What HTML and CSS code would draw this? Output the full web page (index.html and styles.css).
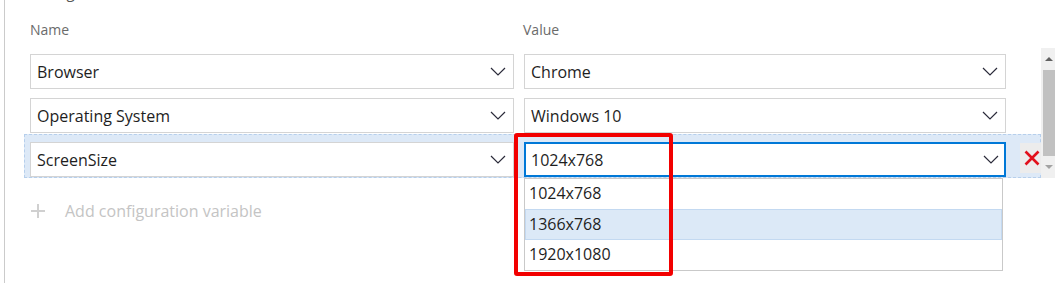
FILE: index.html
```html
<!DOCTYPE html>
<html lang="en">
<head>
  <meta charset="UTF-8" />
  <meta name="viewport" content="width=device-width, initial-scale=1.0"/>
  <title>Configuration Variables</title>
  <link rel="stylesheet" href="styles.css">
</head>
<body>

  <div class="panel">
    <h3 class="section-title">Configurations</h3>

    <div class="labels">
      <span>Name</span>
      <span>Value</span>
    </div>

    <div class="table">
      <div class="rows">
        <div class="row">
          <div class="select">
            <span>Browser</span>
            <svg class="chev" width="16" height="9" viewBox="0 0 16 9"><polyline points="1,1 8,8 15,1" /></svg>
          </div>
          <div class="select">
            <span>Chrome</span>
            <svg class="chev" width="16" height="9" viewBox="0 0 16 9"><polyline points="1,1 8,8 15,1" /></svg>
          </div>
        </div>

        <div class="row">
          <div class="select">
            <span>Operating System</span>
            <svg class="chev" width="16" height="9" viewBox="0 0 16 9"><polyline points="1,1 8,8 15,1" /></svg>
          </div>
          <div class="select">
            <span>Windows 10</span>
            <svg class="chev" width="16" height="9" viewBox="0 0 16 9"><polyline points="1,1 8,8 15,1" /></svg>
          </div>
        </div>

        <div class="row selected">
          <div class="select">
            <span>ScreenSize</span>
            <svg class="chev" width="16" height="9" viewBox="0 0 16 9"><polyline points="1,1 8,8 15,1" /></svg>
          </div>
          <div class="select-wrap">
            <div class="select focused">
              <span>1024x768</span>
              <svg class="chev" width="16" height="9" viewBox="0 0 16 9"><polyline points="1,1 8,8 15,1" /></svg>
            </div>
            <ul class="options">
              <li>1024x768</li>
              <li class="hover">1366x768</li>
              <li>1920x1080</li>
            </ul>
          </div>
          <button class="remove" title="Remove">
            <svg width="16" height="16" viewBox="0 0 16 16"><path d="M1.5 1.5 L14.5 14.5 M14.5 1.5 L1.5 14.5" /></svg>
          </button>
        </div>
      </div>

      <div class="scrollbar">
        <div class="arrow up"></div>
        <div class="thumb"></div>
        <div class="arrow down"></div>
      </div>
    </div>

    <div class="add-row">
      <svg class="plus" width="14" height="14" viewBox="0 0 14 14"><path d="M7 0 V14 M0 7 H14" /></svg>
      <span>Add configuration variable</span>
    </div>
  </div>

  <div class="callout"></div>

</body>
</html>
```

FILE: styles.css
```css
body {
  margin: 0;
  font-family: "Open Sans", "Noto Sans", sans-serif;
  color: #1e1e1e;
  background-color: #fff;
  height: 283px;
  overflow: hidden;
}

.panel {
  margin-left: 4px;
  border-left: 1px solid #cbcbcb;
  height: 301px;
  padding-left: 19px;
}

.section-title {
  margin: -18px 0 0 6px;
  font-size: 15px;
  font-weight: normal;
  line-height: 20px;
  color: #555;
}

.labels {
  display: grid;
  grid-template-columns: 493px auto;
  padding: 0 0 0 6px;
  margin-top: 18px;
  height: 26px;
  line-height: 20px;
  font-size: 14px;
  color: #6b6b6b;
}

.table {
  display: flex;
}

.rows {
  width: 1017px;
}

.row {
  display: grid;
  grid-template-columns: 484px 482px auto;
  column-gap: 10px;
  align-items: start;
  padding: 7px 0 0 5px;
  border: 1px solid transparent;
}

.row.selected {
  background-color: #dde9f7;
  border: 1px dashed #b6cfec;
}

.select {
  display: flex;
  align-items: center;
  justify-content: space-between;
  box-sizing: border-box;
  height: 35px;
  padding: 0 7px 0 6px;
  border: 1px solid #d4d4d4;
  background-color: #fff;
  font-size: 16px;
}

.select.focused {
  border: 2px solid #0078d7;
  padding: 0 5px 0 5px;
}

.chev polyline {
  fill: none;
  stroke: #2b2b3a;
  stroke-width: 1.2;
}

.select-wrap {
  position: relative;
}

.options {
  position: absolute;
  top: 36px;
  left: 0;
  width: 479px;
  box-sizing: border-box;
  margin: 0;
  padding: 0;
  list-style: none;
  border: 1px solid #c9c9c9;
  background-color: #fff;
  font-size: 16px;
  z-index: 2;
}

.options li {
  height: 30px;
  line-height: 29px;
  padding-left: 4px;
  box-sizing: border-box;
}

.options li.hover {
  height: 31px;
  background-color: #dce9f7;
  border: 1px solid #c3d9f1;
  padding-left: 3px;
}

.remove {
  width: 21px;
  height: 30px;
  margin: 1px 0 0 4px;
  padding: 0 0 0 2px;
  border: none;
  background-color: #ececec;
  display: flex;
  align-items: center;
  justify-content: center;
}

.remove path {
  stroke: #e2101b;
  stroke-width: 2.6;
  fill: none;
}

.scrollbar {
  width: 14px;
  height: 130px;
  margin-top: 2px;
  background-color: #f0f0f0;
  display: flex;
  flex-direction: column;
  align-items: flex-end;
}

.arrow {
  width: 12px;
  height: 22px;
  display: flex;
  align-items: center;
  justify-content: center;
}

.arrow.up::before {
  content: "";
  border-left: 4px solid transparent;
  border-right: 4px solid transparent;
  border-bottom: 4px solid #606060;
}

.arrow.down::before {
  content: "";
  border-left: 4px solid transparent;
  border-right: 4px solid transparent;
  border-top: 4px solid #a3a3a3;
}

.thumb {
  width: 12px;
  height: 87px;
  background-color: #c1c1c1;
}

.add-row {
  display: flex;
  align-items: center;
  height: 30px;
  margin-top: 18px;
  padding-left: 7px;
  font-size: 16px;
  color: #c4c4c4;
}

.plus {
  margin-right: 20px;
}

.plus path {
  stroke: #d0d0d0;
  stroke-width: 2;
}

.callout {
  position: absolute;
  left: 514px;
  top: 133px;
  width: 159px;
  height: 143px;
  box-sizing: border-box;
  border: 4px solid #f20000;
  border-radius: 3px;
  z-index: 3;
}
```
